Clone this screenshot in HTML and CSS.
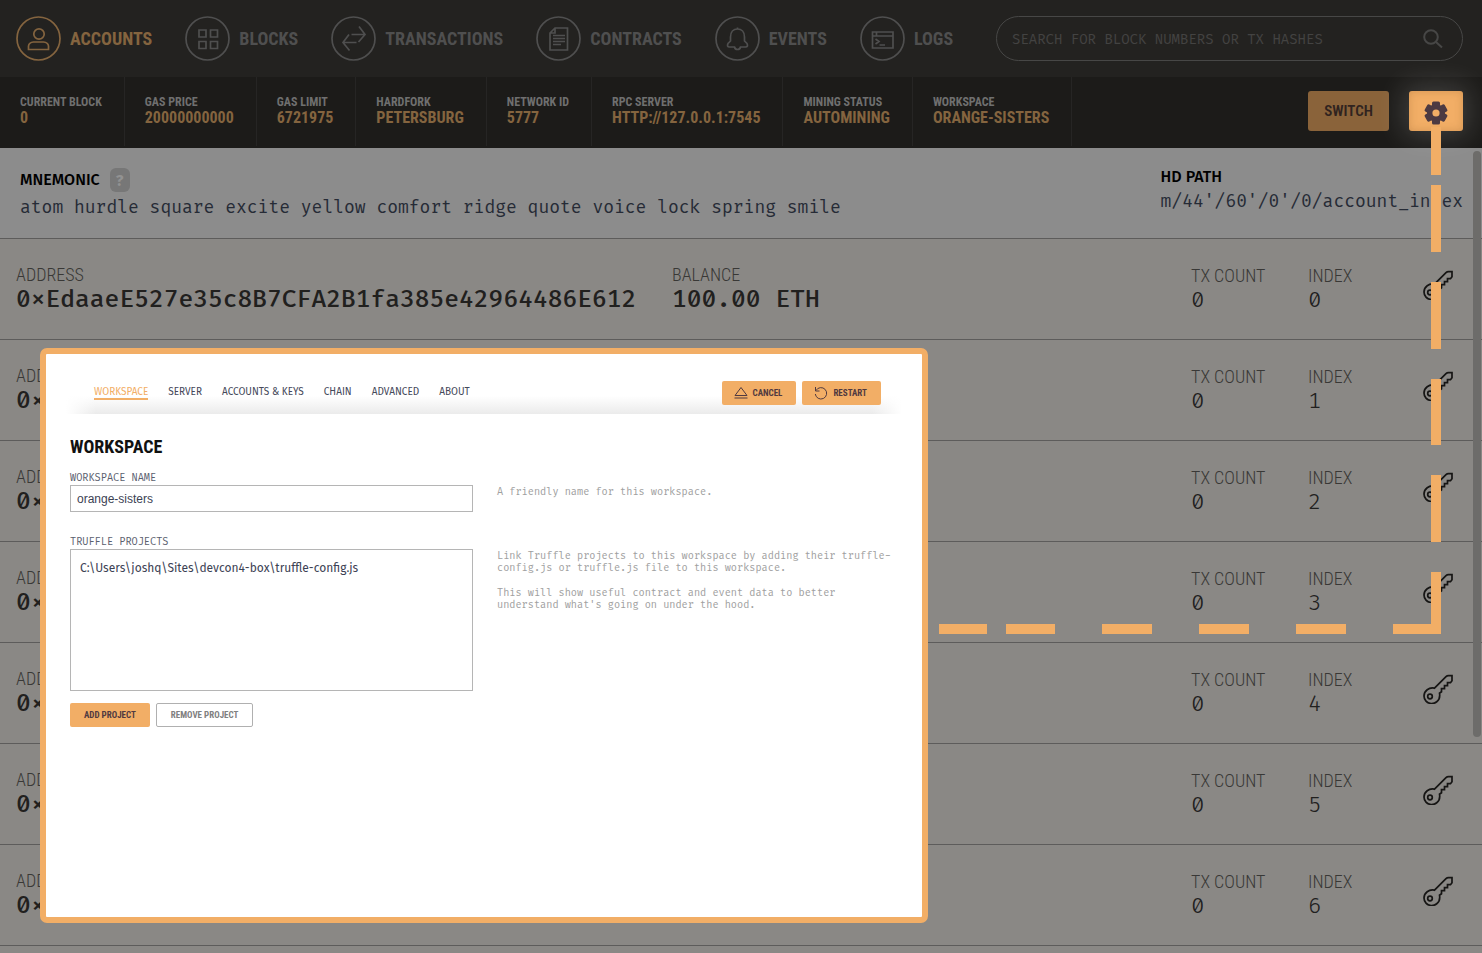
FILE: index.html
```
<!DOCTYPE html>
<html lang="en">
<head>
<meta charset="utf-8">
<title>Ganache</title>
<link rel="stylesheet" href="styles.css">
</head>
<body>
<div class="app">
  <header class="topbar">
    <nav class="nav">
      <a class="nav-item active" href="#accounts">
        <svg class="nav-icon" viewBox="0 0 45 45"><circle cx="22.5" cy="22.5" r="21.5"/><circle cx="23" cy="18" r="5.2"/><path d="M12.5 33.5v-3.5q.5-3.500 5-4h10q4.500.5 5 4v3.500z"/></svg>
        ACCOUNTS</a>
      <a class="nav-item" href="#blocks">
        <svg class="nav-icon" viewBox="0 0 45 45"><circle cx="22.500" cy="22.500" r="21.500"/><path d="M14 14h7v7h-7zM25.500 14h7v7h-7zM14 25.500h7v7h-7zM25.500 25.500h7v7h-7z"/></svg>
        BLOCKS</a>
      <a class="nav-item" href="#transactions">
        <svg class="nav-icon" viewBox="0 0 45 45"><circle cx="22.500" cy="22.500" r="21.500"/><path d="M20.500 18.500h13M28 10.500l6 8-6.500 7.500M25.500 26.500h-13M18 18.500l-6 8 6.500 8"/></svg>
        TRANSACTIONS</a>
      <a class="nav-item" href="#contracts">
        <svg class="nav-icon" viewBox="0 0 45 45"><circle cx="22.500" cy="22.500" r="21.500"/><path d="M19 12h12.500v22h-17.500v-17zM19 12v5h-5M17 19.500h12M17 22.500h12M17 25.500h12M17 28.500h8"/></svg>
        CONTRACTS</a>
      <a class="nav-item" href="#events">
        <svg class="nav-icon" viewBox="0 0 45 45"><circle cx="22.500" cy="22.500" r="21.500"/><path d="M22.500 11.500v1.500M15.500 21c0-5 3-8 7-8s7 3 7 8v4l2.500 2.500q1.500 3.500-1.500 3.500h-5q-.5 2.500-3 2.500t-3-2.500h-5q-3 0-1.500-3.500l2.500-2.500z"/></svg>
        EVENTS</a>
      <a class="nav-item" href="#logs">
        <svg class="nav-icon" viewBox="0 0 45 45"><circle cx="22.500" cy="22.500" r="21.500"/><path d="M12.500 16h20.500v16h-20.500zM12.500 20h20.500M16.500 16v4M15.500 23l3.500 2.500-3.500 2.500M19.500 29h5.500"/></svg>
        LOGS</a>
    </nav>
    <form class="search" role="search">
      <input class="search-input" type="search" aria-label="Search" placeholder="SEARCH FOR BLOCK NUMBERS OR TX HASHES">
      <button class="search-button" type="button" aria-label="Search"><svg viewBox="0 0 20 20" width="20" height="20"><circle cx="8" cy="8" r="6.800"/><path d="M13 13l6 5.500"/></svg></button>
    </form>
  </header>

  <section class="status">
    <dl class="status-list">
      <div class="stat"><dt>CURRENT BLOCK</dt><dd>0</dd></div>
      <div class="stat"><dt>GAS PRICE</dt><dd>20000000000</dd></div>
      <div class="stat"><dt>GAS LIMIT</dt><dd>6721975</dd></div>
      <div class="stat"><dt>HARDFORK</dt><dd>PETERSBURG</dd></div>
      <div class="stat"><dt>NETWORK ID</dt><dd>5777</dd></div>
      <div class="stat"><dt>RPC SERVER</dt><dd>HTTP://127.0.0.1:7545</dd></div>
      <div class="stat"><dt>MINING STATUS</dt><dd>AUTOMINING</dd></div>
      <div class="stat"><dt>WORKSPACE</dt><dd>ORANGE-SISTERS</dd></div>
    </dl>
    <div class="actions">
      <button class="switch" type="button">SWITCH</button>
      <button class="settings" type="button" aria-label="Settings"><svg viewBox="-12 -12 24 24" width="24" height="24"><circle class="gear" r="9"/><rect class="gear" x="-4" y="-11.500" width="8" height="23" rx="1.500"/><rect class="gear" x="-4" y="-11.500" width="8" height="23" rx="1.500" transform="rotate(60)"/><rect class="gear" x="-4" y="-11.500" width="8" height="23" rx="1.500" transform="rotate(120)"/><circle class="gear-hole" r="3.600"/></svg></button>
    </div>
  </section>

  <section class="seed">
    <div>
      <h2 class="seed-title">MNEMONIC <button class="help" type="button">?</button></h2>
      <p class="seed-value">atom hurdle square excite yellow comfort ridge quote voice lock spring smile</p>
    </div>
    <div>
      <h2 class="path-title">HD PATH</h2>
      <p class="seed-value">m/44'/60'/0'/0/account_index</p>
    </div>
  </section>

  <main class="accounts" id="accounts">
    <div class="account">
      <div class="cell main-cell"><span>ADDRESS</span><b>0xEdaaeE527e35c8B7CFA2B1fa385e42964486E612</b></div>
      <div class="cell main-cell"><span>BALANCE</span><b>100.00 ETH</b></div>
      <div class="cell"><span>TX COUNT</span><b>0</b></div>
      <div class="cell"><span>INDEX</span><b>0</b></div>
      <button class="key" type="button" aria-label="Show keys"><svg viewBox="0 0 30 30" width="30" height="30"><use href="#key"/></svg></button>
    </div>
    <div class="account">
      <div class="cell main-cell"><span>ADDRESS</span><b>0×</b></div><div></div>
      <div class="cell"><span>TX COUNT</span><b>0</b></div>
      <div class="cell"><span>INDEX</span><b>1</b></div>
      <button class="key" type="button" aria-label="Show keys"><svg viewBox="0 0 30 30" width="30" height="30"><use href="#key"/></svg></button>
    </div>
    <div class="account">
      <div class="cell main-cell"><span>ADDRESS</span><b>0×</b></div><div></div>
      <div class="cell"><span>TX COUNT</span><b>0</b></div>
      <div class="cell"><span>INDEX</span><b>2</b></div>
      <button class="key" type="button" aria-label="Show keys"><svg viewBox="0 0 30 30" width="30" height="30"><use href="#key"/></svg></button>
    </div>
    <div class="account">
      <div class="cell main-cell"><span>ADDRESS</span><b>0×</b></div><div></div>
      <div class="cell"><span>TX COUNT</span><b>0</b></div>
      <div class="cell"><span>INDEX</span><b>3</b></div>
      <button class="key" type="button" aria-label="Show keys"><svg viewBox="0 0 30 30" width="30" height="30"><use href="#key"/></svg></button>
    </div>
    <div class="account">
      <div class="cell main-cell"><span>ADDRESS</span><b>0×</b></div><div></div>
      <div class="cell"><span>TX COUNT</span><b>0</b></div>
      <div class="cell"><span>INDEX</span><b>4</b></div>
      <button class="key" type="button" aria-label="Show keys"><svg viewBox="0 0 30 30" width="30" height="30"><use href="#key"/></svg></button>
    </div>
    <div class="account">
      <div class="cell main-cell"><span>ADDRESS</span><b>0×</b></div><div></div>
      <div class="cell"><span>TX COUNT</span><b>0</b></div>
      <div class="cell"><span>INDEX</span><b>5</b></div>
      <button class="key" type="button" aria-label="Show keys"><svg viewBox="0 0 30 30" width="30" height="30"><use href="#key"/></svg></button>
    </div>
    <div class="account">
      <div class="cell main-cell"><span>ADDRESS</span><b>0×</b></div><div></div>
      <div class="cell"><span>TX COUNT</span><b>0</b></div>
      <div class="cell"><span>INDEX</span><b>6</b></div>
      <button class="key" type="button" aria-label="Show keys"><svg viewBox="0 0 30 30" width="30" height="30"><use href="#key"/></svg></button>
    </div>
  </main>
  <div class="scrollbar"></div>

  <svg class="connector" viewBox="0 0 502 507" width="502" height="507" aria-hidden="true">
    <path d="M492 0h10v48h-10zM492 58h10v67h-10zM492 155h10v67h-10zM492 252h10v66h-10zM492 348h10v67h-10zM492 445h10v62h-48v-10h38zM0 497h48v10h-48zM67 497h49v10h-49zM163 497h50v10h-50zM260 497h50v10h-50zM357 497h50v10h-50z"/>
  </svg>

  <section class="dialog" role="dialog" aria-label="Workspace settings">
    <header class="dialog-head">
      <nav class="tabs">
        <a class="tab current" href="#workspace">WORKSPACE</a>
        <a class="tab" href="#server">SERVER</a>
        <a class="tab" href="#keys">ACCOUNTS &amp; KEYS</a>
        <a class="tab" href="#chain">CHAIN</a>
        <a class="tab" href="#advanced">ADVANCED</a>
        <a class="tab" href="#about">ABOUT</a>
      </nav>
      <div class="dialog-actions">
        <button class="small primary icon-button" type="button"><svg viewBox="0 0 14 14" width="14" height="14"><path d="M7 1.500L13 9.500H1zM.5 12h13"/></svg>CANCEL</button>
        <button class="small primary icon-button" type="button"><svg viewBox="0 0 14 14" width="14" height="14"><path d="M1.500 1v4h4M2 4.500a5.700 5.700 0 1 1-.7 3.500"/></svg>RESTART</button>
      </div>
    </header>
    <form class="dialog-body">
      <h1 class="dialog-title">WORKSPACE</h1>
      <div class="field">
        <div class="control">
          <label for="name">WORKSPACE NAME</label>
          <input id="name" class="name-input" type="text" value="orange-sisters">
        </div>
        <div class="hint"><p>A friendly name for this workspace.</p></div>
      </div>
      <div class="field">
        <div class="control">
          <label for="projects">TRUFFLE PROJECTS</label>
          <textarea id="projects" class="projects" spellcheck="false">C:\Users\joshq\Sites\devcon4-box\truffle-config.js</textarea>
        </div>
        <div class="hint">
          <p>Link Truffle projects to this workspace by adding their truffle-config.js or truffle.js file to this workspace.</p>
          <p>This will show useful contract and event data to better understand what's going on under the hood.</p>
        </div>
      </div>
      <div class="project-actions">
        <button class="small primary" type="button">ADD PROJECT</button>
        <button class="small outline" type="button">REMOVE PROJECT</button>
      </div>
    </form>
  </section>
</div>
<svg class="defs" aria-hidden="true"><defs><g id="key"><circle cx="7" cy="22.500" r="2.300"/><path d="M11.500 14.200L23 2.700q1-1 2.500-1h3.500v5l-1.500 2h-3v3h-3v3h-3v3l-2 1.500c1.500 9-6 10.500-8.500 10.300-4-.3-7-3.500-7-7.500 0-5 5-9 10.500-7.800z"/></g></defs></svg>
</body>
</html>
```
FILE: styles.css
```
* { box-sizing: border-box; }
body {
  margin: 0;
  font-family: "Roboto Condensed", Roboto, sans-serif;
  background: #8a8885;
}
h1, h2, p, dl, dd { margin: 0; }
button, input, textarea { font: inherit; margin: 0; }
a { text-decoration: none; }
svg { fill: none; stroke: currentColor; display: block; }
.defs { position: absolute; width: 0; height: 0; }
.app { position: relative; height: 100vh; overflow: hidden; }

.topbar {
  display: flex;
  align-items: center;
  justify-content: space-between;
  padding: 16px 19px 16px 16px;
  background: #232220;
}
.nav { display: flex; gap: 33px; }
.nav-item {
  display: flex;
  align-items: center;
  gap: 9px;
  color: #4f4f4f;
  font-size: 18px;
  font-weight: 700;
}
.nav-item.active { color: #84643f; }
.nav-icon { width: 45px; height: 45px; stroke-width: 1.7; }
.search {
  display: flex;
  align-items: center;
  flex: 0 1 467px;
  height: 45px;
  padding: 0 19px 0 15px;
  border: 1px solid #474746;
  border-radius: 23px;
}
.search-input {
  flex: 1;
  min-width: 0;
  padding: 2px 0 0;
  border: 0;
  outline: 0;
  background: none;
  color: #777;
  font-family: "Fira Mono", "Fira Code", monospace;
  font-size: 14px;
}
.search-input::placeholder { color: #434342; opacity: 1; }
.search-button { padding: 0; border: 0; background: none; color: #474746; stroke-width: 2; }

.status {
  display: flex;
  justify-content: space-between;
  padding-bottom: 2px;
  background: #1c1b19;
}
.status-list { display: flex; }
.stat { padding: 17px 22px 20px 20px; border-right: 1px solid #262524; }
.stat dt {
  color: #6f6f6f;
  font-size: 12px;
  font-weight: 700;
  line-height: 16px;
}
.stat dd { color: #84643f; font-size: 16px; font-weight: 700; line-height: 16px; }
.actions { display: flex; gap: 20px; padding: 14px 19px 0 0; }
.switch, .settings { height: 40px; border: 0; border-radius: 3px; }
.switch {
  padding: 0 16px;
  background: #8a633a;
  color: #30231f;
  font-size: 15px;
  font-weight: 600;
}
.settings {
  display: grid;
  place-items: center;
  position: relative;
  width: 54px;
  padding: 3px 0 0;
  background: #f2ae66;
  box-shadow: 0 0 28px 6px rgba(255, 255, 255, .16), inset 0 0 8px rgba(140, 90, 40, .3);
}
.gear { fill: #4c3a42; stroke: none; }
.gear-hole { fill: #f2ae66; stroke: none; }

.seed {
  display: flex;
  justify-content: space-between;
  padding: 19px 19px 17px 20px;
  background: #8c8c8c;
  border-bottom: 1px solid #5d5c5b;
  font-family: "Fira Sans", sans-serif;
}
.seed-title, .path-title {
  display: flex;
  align-items: center;
  gap: 10px;
  color: #000;
  font-size: 16px;
  font-weight: 500;
}
.seed-title { line-height: 26px; }
.path-title { line-height: 20px; }
.help {
  width: 20px;
  height: 24px;
  padding: 0;
  border: 0;
  border-radius: 6px;
  background: #777;
  color: #929292;
  font-weight: 700;
}
.seed-value {
  color: #262b36;
  font-family: "Fira Mono", "Fira Code", monospace;
  font-size: 18px;
  line-height: 28px;
}

.account {
  display: grid;
  grid-template-columns: minmax(0, 656px) 1fr 117px 115px 30px;
  padding: 25px 29px 24px 16px;
  border-bottom: 1px solid #5d5c5b;
}
.cell { display: flex; flex-direction: column; padding-top: 1px; }
.main-cell { padding-top: 0; }
.cell span { color: #393836; font-size: 18px; font-weight: 300; line-height: 22px; }
.cell b {
  color: #21201e;
  font-family: "Fira Code", "Fira Mono", monospace;
  font-size: 22px;
  font-weight: 300;
  line-height: 28px;
}
.main-cell b { font-size: 24px; font-weight: 500; line-height: 28px; }
.key { align-self: start; padding: 6px 0 0; border: 0; background: none; color: #161514; }
.key svg { stroke-width: 1.7; }
.scrollbar {
  position: absolute;
  top: 151px;
  right: 1px;
  width: 8px;
  height: 586px;
  border-radius: 4px;
  background: #6d6c6a;
}
.connector { position: absolute; top: 127px; right: 41px; fill: #f2ae66; stroke: none; }

.dialog {
  position: absolute;
  top: 348px;
  left: 40px;
  width: min(888px, calc(100% - 80px));
  min-height: 575px;
  border: 6px solid #f2ae66;
  border-radius: 7px;
  background: #fff;
}
.dialog-head {
  display: flex;
  align-items: center;
  justify-content: space-between;
  height: 60px;
  margin: 0 20px;
  padding: 17px 21px 0 28px;
  background:
    linear-gradient(to right, #fff, transparent 30px, transparent calc(100% - 30px), #fff),
    linear-gradient(to top, #ebebeb, #fff 18px);
}
.tabs { display: flex; gap: 20px; }
.tab {
  padding-top: 1px;
  border-bottom: 2px solid transparent;
  color: #45495a;
  font-family: "Fira Sans", sans-serif;
  font-size: 10px;
  line-height: 12px;
}
.tab.current { border-color: #f2ae66; color: #f2ae66; }
.dialog-actions, .project-actions { display: flex; gap: 6px; }
.small {
  height: 24px;
  padding: 0 14px;
  border: 0;
  border-radius: 2px;
  font-size: 9px;
  font-weight: 700;
}
.primary { background: #f2ae66; color: #513a40; }
.outline { border: 1px solid #b0b0b0; background: #fff; color: #808080; }
.icon-button { display: flex; align-items: center; gap: 5px; padding: 0 14px 0 12px; }

.dialog-body { padding: 22px 24px 24px; }
.dialog-title { color: #111; font-size: 18px; font-weight: 700; line-height: 22px; }
.field { display: grid; grid-template-columns: 403px 1fr; gap: 24px; margin-top: 14px; }
.field + .field { margin-top: 24px; }
.control { display: flex; flex-direction: column; }
.control label {
  color: #5a606e;
  font-family: "Fira Code", "Fira Mono", monospace;
  font-size: 10px;
  line-height: 12px;
}
.control input, .control textarea {
  border: 1px solid #b5b5b5;
  border-radius: 0;
  background: #fff;
  color: #3c4254;
  outline: 0;
  resize: none;
}
.name-input {
  height: 27px;
  margin-top: 1px;
  padding: 0 6px;
  font-family: "Liberation Sans", Arial, sans-serif;
  font-size: 12px;
}
.projects {
  height: 142px;
  margin-top: 1px;
  padding: 10px 9px;
  font-family: "Fira Sans", sans-serif;
  font-size: 12px;
  line-height: 16px;
}
.hint {
  padding-top: 14px;
  color: #a0a0a0;
  font-family: "Fira Code", "Fira Mono", monospace;
  font-size: 10px;
  line-height: 12px;
}
.hint p + p { margin-top: 13px; }
.project-actions { margin-top: 12px; }
```
